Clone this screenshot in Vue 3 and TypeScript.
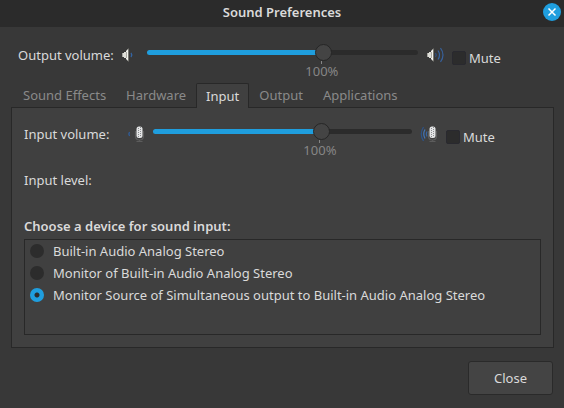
<script setup lang="ts">
import { ref } from 'vue'

const MAX_VOLUME = 151

const tabs = ['Sound Effects', 'Hardware', 'Input', 'Output', 'Applications']
const activeTab = ref('Input')

const devices = [
  'Built-in Audio Analog Stereo',
  'Monitor of Built-in Audio Analog Stereo',
  'Monitor Source of Simultaneous output to Built-in Audio Analog Stereo',
]
const selectedDevice = ref(2)

const outputVolume = ref(100)
const inputVolume = ref(100)
const outputMuted = ref(false)
const inputMuted = ref(false)

const share = (value: number): string => `${(value / MAX_VOLUME) * 100}%`
</script>

<template>
  <main class="window">
    <header class="titlebar">
      <h1>Sound Preferences</h1>
      <button class="dismiss" type="button" aria-label="Close window">
        <svg viewBox="0 0 18 18" width="18" height="18" aria-hidden="true">
          <circle cx="9" cy="9" r="9" fill="#1f9ede" />
          <path d="M5.5 5.5l7 7M12.5 5.5l-7 7" stroke="#fff" stroke-width="1.5" />
        </svg>
      </button>
    </header>

    <section class="volume volume-output">
      <label class="caption" for="output-volume">Output volume:</label>
      <svg class="icon" viewBox="0 0 24 24" aria-hidden="true">
        <path d="M4 9h2v4H4z" fill="#a5a5a0" />
        <path d="M5 9h1v4H5zM6 8h2v6H6z" fill="#deded8" />
        <path d="M8 7l2-2v12l-2-2z" fill="#f1f1ec" />
        <path d="M8 8h1v6H8z" fill="#aaaaa4" />
        <path d="M10 4.500h1v13h-1z" fill="#777771" />
        <path d="M13 9q1.500 2 0 4" fill="none" stroke="#3465a4" stroke-width="1.3" />
      </svg>
      <div class="scale">
        <input
          id="output-volume"
          v-model.number="outputVolume"
          type="range"
          min="0"
          :max="MAX_VOLUME"
          :style="{ '--fill': share(outputVolume) }"
        />
        <div class="marks">
          <span class="mark" :style="{ marginLeft: share(100) }">100%</span>
        </div>
      </div>
      <svg class="icon" viewBox="0 0 24 24" aria-hidden="true">
        <path d="M4 9h2v4H4z" fill="#a5a5a0" />
        <path d="M5 9h1v4H5zM6 8h2v6H6z" fill="#deded8" />
        <path d="M8 7l2-2v12l-2-2z" fill="#f1f1ec" />
        <path d="M8 8h1v6H8z" fill="#aaaaa4" />
        <path d="M10 4.500h1v13h-1z" fill="#777771" />
        <g fill="none" stroke-width="1.2">
          <path d="M12.5 9q1.500 2 0 4" stroke="#2c5288" />
          <path d="M15 6.500q3 4.500 0 9" stroke="#3664a2" />
          <path d="M17.500 4q5 7 0 14" stroke="#37619c" />
        </g>
      </svg>
      <label class="mute"><input v-model="outputMuted" type="checkbox" />Mute</label>
    </section>

    <nav class="tabs" role="tablist">
      <button
        v-for="tab in tabs"
        :key="tab"
        type="button"
        role="tab"
        class="tab"
        :class="{ active: tab === activeTab }"
        :aria-selected="tab === activeTab"
        @click="activeTab = tab"
      >
        {{ tab }}
      </button>
    </nav>

    <section class="panel" role="tabpanel">
      <div class="volume">
        <label class="caption" for="input-volume">Input volume:</label>
        <svg class="icon" viewBox="0 0 24 24" aria-hidden="true">
          <path d="M5.500 9q-1.300 2 0 4" fill="none" stroke="#2f5f9f" stroke-width="1.3" />
          <path d="M11.5 8v5q0 4 4 4t4-4V8M15.500 17v2M12.500 18.500h6" fill="none" stroke="#5c5c5c" stroke-width="1.2" />
          <rect x="12.500" y="3.500" width="6" height="11.500" rx="2.500" fill="#e4e5e6" />
          <path d="M14.500 5v9M16.500 4v10" stroke="#8b8d90" stroke-dasharray="1 1" />
        </svg>
        <div class="scale">
          <input
            id="input-volume"
            v-model.number="inputVolume"
            type="range"
            min="0"
            :max="MAX_VOLUME"
            :style="{ '--fill': share(inputVolume) }"
          />
          <div class="marks">
            <span class="mark" :style="{ marginLeft: share(100) }">100%</span>
          </div>
        </div>
        <svg class="icon" viewBox="0 0 24 24" aria-hidden="true">
          <g fill="none" stroke-width="1.2">
            <path d="M6.500 4q-4.500 7 0 14" stroke="#2d5489" />
            <path d="M8 6.500q-2.500 4.500 0 9" stroke="#4275b8" />
            <path d="M10 8.500q-1.500 2.500 0 5" stroke="#3768a8" />
          </g>
          <path d="M11.500 8v5q0 4 4 4t4-4V8M15.500 17v2M12.500 18.500h6" fill="none" stroke="#5c5c5c" stroke-width="1.2" />
          <rect x="12.500" y="3.500" width="6" height="11.500" rx="2.500" fill="#e4e5e6" />
          <path d="M14.500 5v9M16.500 4v10" stroke="#8b8d90" stroke-dasharray="1 1" />
        </svg>
        <label class="mute"><input v-model="inputMuted" type="checkbox" />Mute</label>
      </div>

      <p class="level">Input level:</p>

      <fieldset class="chooser">
        <legend>Choose a device for sound input:</legend>
        <div class="devices">
          <label v-for="(device, index) in devices" :key="device" class="device">
            <input v-model="selectedDevice" type="radio" name="device" :value="index" />
            {{ device }}
          </label>
        </div>
      </fieldset>
    </section>

    <footer class="actions">
      <button class="close" type="button">Close</button>
    </footer>
  </main>
</template>

<style>
body {
  margin: 0;
  background: #383838;
}
</style>

<style scoped>
.window {
  box-sizing: border-box;
  min-height: 100vh;
  background: #383838;
  color: #dadada;
  font-family: 'Noto Sans', 'Open Sans', sans-serif;
  font-size: 13px;
  line-height: 24px;
}

button,
input {
  font: inherit;
  color: inherit;
  margin: 0;
}

.titlebar {
  display: grid;
  grid-template-columns: 18px 1fr 18px;
  align-items: start;
  height: 27px;
  padding: 3px 3px 0;
  box-sizing: border-box;
  background: #2b2b2b;
}

h1 {
  grid-column: 2;
  margin: 0;
  font-size: 13px;
  font-weight: 600;
  line-height: 18px;
  text-align: center;
}

.dismiss {
  display: flex;
  padding: 0;
  border: 0;
  background: none;
}

.volume {
  display: grid;
  grid-template-columns: 95px 24px 1fr 24px 95px;
  column-gap: 5px;
  align-items: start;
}

.volume-output {
  padding: 17px 17px 0 18px;
}

.caption {
  line-height: 22px;
  white-space: nowrap;
}

.icon {
  display: block;
  width: 24px;
  height: 24px;
}

.scale {
  min-width: 0;
  height: 39px;
}

.scale input {
  display: block;
  width: 100%;
  height: 17px;
  appearance: none;
  background: none;
}

.scale input::-webkit-slider-runnable-track {
  height: 5px;
  border-radius: 3px;
  background: linear-gradient(to right, #1f9ede var(--fill), #2b2b2b var(--fill));
}

.scale input::-webkit-slider-thumb {
  appearance: none;
  box-sizing: border-box;
  width: 17px;
  height: 17px;
  margin-top: -6px;
  border: 1px solid #262626;
  border-radius: 50%;
  background: #444;
}

.marks {
  display: flex;
  padding: 0 10px 0 6px;
}

.mark {
  display: flex;
  flex-direction: column;
  align-items: center;
  width: 40px;
  color: #868686;
  line-height: 14px;
  transform: translateX(-50%);
}

.mark::before {
  content: '';
  width: 1px;
  height: 3px;
  background: #868686;
}

.mute {
  display: flex;
  align-items: center;
  gap: 3px;
  line-height: 28px;
}

.mute input {
  appearance: none;
  box-sizing: border-box;
  width: 14px;
  height: 14px;
  border: 1px solid #29292f;
  border-radius: 2px;
  background: #2c2c2c;
}

.mute input:checked {
  background: #1f9ede;
}

.tabs {
  display: flex;
  padding: 0 13px;
}

.tab {
  padding: 0 9px;
  border: 1px solid transparent;
  border-bottom: 0;
  border-radius: 2px 2px 0 0;
  background: none;
  color: #8a8a8a;
  line-height: 23px;
}

.tab.active {
  z-index: 1;
  margin-bottom: -1px;
  border-color: #282828;
  background: #404040;
  color: #dadada;
}

.panel {
  margin: 0 10px 0 11px;
  padding: 15px 12px 12px;
  border: 1px solid #282828;
  background: #404040;
}

.level {
  margin: 6px 0 22px;
}

.chooser {
  margin: 0;
  padding: 0;
  border: 0;
  min-width: 0;
}

legend {
  padding: 0 0 1px;
  font-weight: 600;
}

.devices {
  box-sizing: border-box;
  min-height: 96px;
  padding: 0 5px;
  border: 1px solid #282828;
}

.device {
  display: flex;
  align-items: center;
  gap: 9px;
  line-height: 22px;
  white-space: nowrap;
}

.device input {
  appearance: none;
  width: 14px;
  height: 14px;
  border-radius: 50%;
  background: #2c2c2c;
}

.device input:checked {
  background: radial-gradient(circle, #2b2b2b 2px, #1f9ede 3px);
}

.actions {
  display: flex;
  justify-content: flex-end;
  padding: 13px 11px;
}

.close {
  min-width: 85px;
  padding: 4px 16px;
  border: 1px solid #2a2a2a;
  border-radius: 3px;
  background: #444;
}
</style>
